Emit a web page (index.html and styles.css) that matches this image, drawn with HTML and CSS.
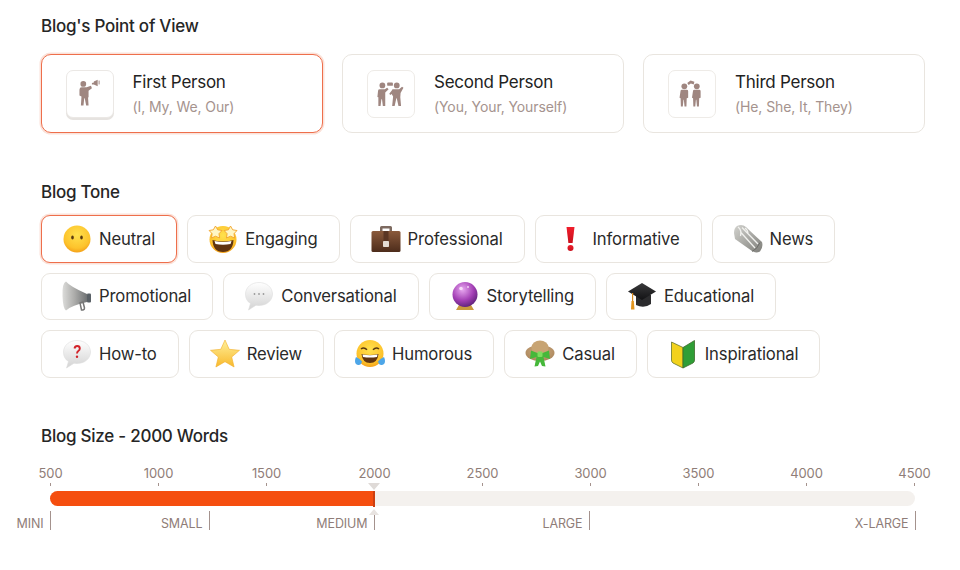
FILE: index.html
```html
<!DOCTYPE html>
<html lang="en">
<head>
<meta charset="utf-8">
<title>Blog settings</title>
<link rel="stylesheet" href="styles.css">
</head>
<body>
<main class="page">
  <section class="section">
    <h2 class="heading">Blog's Point of View</h2>
    <div class="cards">
      <div class="card selected">
        <div class="thumb">
          <svg class="figure" viewBox="0 0 48 48"><circle cx="17" cy="13.500" r="3"/><path d="M13 19.500q0-2.500 2.500-2.500h5l4.500-1.500 1 2.500-3.500 2.500v6.500l-.5 1 .5 8h-2.500l-1.500-7.500h-.5l-.8 7.500h-2.700l.6-9.500-2.100-1z"/><path d="M26 12.500l2-.5v-1l4-1.800v6.600l-4-1.800h-2z"/><rect x="33" y="10" width="1" height="4"/></svg>
        </div>
        <div class="card-text"><div class="card-title">First Person</div><div class="card-sub">(I, My, We, Our)</div></div>
      </div>
      <div class="card">
        <div class="thumb">
          <svg class="figure" viewBox="0 0 48 48"><circle cx="15" cy="15" r="3"/><circle cx="30" cy="15" r="3"/><path d="M10.500 20.500q0-1.500 2-1.500h5l2.500-1.500 1.500 1.500-3.500 3.500v14h-2.500l-.9-7h-.6l-.9 7h-2.300v-9l-1-.5z"/><path d="M25 20q0-1 1-1h6.500l3-2.500 1.500 1-3 5.500-.3 4.500.8 9h-2.700l-1.800-8h-.4l-1.800 8h-2.600l1-10-1.500-2.500-1.500 1-1-1.200z"/><rect x="20" y="12" width="6" height="3.500" rx="1"/></svg>
        </div>
        <div class="card-text"><div class="card-title">Second Person</div><div class="card-sub">(You, Your, Yourself)</div></div>
      </div>
      <div class="card">
        <div class="thumb">
          <svg class="figure" viewBox="0 0 48 48"><circle cx="16" cy="16" r="3"/><circle cx="29" cy="16" r="3"/><path d="M12 21q0-1.500 1.500-1.500h5q1.500 0 1.500 1.500v7l-1.500.5-.3 8.500h-2l-.7-7h-.4l-.7 7h-2l-.3-8.500-1.100-.5z"/><path d="M25 21q0-1.500 1.500-1.500h5q1.500 0 1.500 1.500v7l-1.500.5-.3 8.500h-2l-.7-7h-.4l-.7 7h-2l-.3-8.500-1.100-.5z"/><path d="M19 12.500l3.500-2.500 4 1.200-.7 2.800-3-1-2.300 1.500z"/></svg>
        </div>
        <div class="card-text"><div class="card-title">Third Person</div><div class="card-sub">(He, She, It, They)</div></div>
      </div>
    </div>
  </section>

  <section class="section tone">
    <h2 class="heading">Blog Tone</h2>
    <div class="chips">
      <div class="chip selected">
        <svg class="emoji" viewBox="0 0 30 30"><defs><radialGradient id="face" cx=".5" cy=".35" r=".75"><stop offset="0" stop-color="#ffe14d"/><stop offset=".65" stop-color="#fdc32c"/><stop offset="1" stop-color="#ef8d0e"/></radialGradient></defs><circle cx="15" cy="15" r="13.500" fill="url(#face)"/><ellipse cx="10.500" cy="13.500" rx="1.300" ry="1.900" fill="#5a3a10"/><ellipse cx="19.500" cy="13.500" rx="1.300" ry="1.900" fill="#5a3a10"/></svg>
        <span class="chip-label">Neutral</span>
      </div>
      <div class="chip">
        <svg class="emoji" viewBox="0 0 30 30"><circle cx="15" cy="15.500" r="13.500" fill="url(#face)"/><path d="M4.500 16q10.500 3 21 0-.5 12-10.500 12T4.500 16z" fill="#5f3410"/><path d="M6.500 17q8.500 2 17 0l-1 3q-7.500 1.500-15 0z" fill="#fff"/><path d="M7.500 2l2.200 3.800 4.300.7-3 3.200.6 4.300-4.100-1.800-4 1.800.6-4.300-3-3.200 4.200-.7zM22.500 2l2.200 3.800 4.300.7-3 3.200.6 4.300-4.100-1.800-4 1.800.6-4.300-3-3.200 4.300-.7z" fill="#fff6c4" stroke="#f2a32a" stroke-width=".9"/></svg>
        <span class="chip-label">Engaging</span>
      </div>
      <div class="chip">
        <svg class="emoji" viewBox="0 0 30 30"><defs><linearGradient id="case" x1="0" y1="0" x2="0" y2="1"><stop offset="0" stop-color="#8a5a3c"/><stop offset="1" stop-color="#4d2c1b"/></linearGradient></defs><path d="M9 8V3.500q0-1.500 1.500-1.500h9q1.500 0 1.500 1.500V8h-2.500V4.500h-7V8z" fill="#7d6a60"/><rect x=".5" y="7" width="29" height="21" rx="1.500" fill="url(#case)"/><rect x="12.500" y="7" width="5" height="11" fill="#5a3624"/><rect x="12" y="17" width="6" height="6" rx=".8" fill="#e5dcd3"/></svg>
        <span class="chip-label">Professional</span>
      </div>
      <div class="chip">
        <svg class="emoji" viewBox="0 0 30 30"><defs><linearGradient id="bang" x1="0" y1="0" x2="0" y2="1"><stop offset="0" stop-color="#f01e2c"/><stop offset="1" stop-color="#c8101c"/></linearGradient></defs><path d="M10.500 3h8l-1.900 16h-4.200z" fill="url(#bang)"/><circle cx="14.500" cy="24" r="3" fill="url(#bang)"/></svg>
        <span class="chip-label">Informative</span>
      </div>
      <div class="chip">
        <svg class="emoji" viewBox="0 0 30 30"><defs><linearGradient id="paper" x1="0" y1="0" x2="1" y2="1"><stop offset="0" stop-color="#d2d2ce"/><stop offset="1" stop-color="#7f7f7a"/></linearGradient></defs><path d="M1 9q0-5 3-7 5-2.500 9 1 5 5 16 15 1.500 5-2 9.500-4.500 2-8-.5L2 15z" fill="url(#paper)"/><path d="M5 3q4 3 2.500 9M9 3.500L25 20M7.500 8L22 24M12 4q3 2 3 6" fill="none" stroke="#f1f1ee" stroke-width="1.300"/><path d="M19 27.500q5-2 8-9" fill="none" stroke="#6c6c68" stroke-width="1"/></svg>
        <span class="chip-label">News</span>
      </div>
      <div class="chip">
        <svg class="emoji" viewBox="0 0 30 30"><defs><linearGradient id="horn" x1="0" y1="0" x2="1" y2="0"><stop offset="0" stop-color="#dcdcda"/><stop offset=".5" stop-color="#ababa9"/><stop offset="1" stop-color="#6f7274"/></linearGradient></defs><path d="M4 .500q4 5 21 12.500v8Q10 24 4 29.500 1 28 .5 15T4 .500z" fill="url(#horn)"/><path d="M18 22l3-1 1.500 6q.2 1.500-1.500 2h-1.500z" fill="none" stroke="#777" stroke-width="1.500"/><rect x="25" y="12.500" width="4" height="9" rx="1" fill="#596066"/></svg>
        <span class="chip-label">Promotional</span>
      </div>
      <div class="chip">
        <svg class="emoji" viewBox="0 0 30 30"><defs><linearGradient id="bubble" x1="0" y1="0" x2="0" y2="1"><stop offset="0" stop-color="#ffffff"/><stop offset="1" stop-color="#d3d3d3"/></linearGradient></defs><path d="M15 1.500c7.500 0 13.500 4.800 13.500 11.500S22.500 24.500 15 24.500q-1.500 0-3-.3L4.500 29l2-6.500C3 20.500 1.500 17 1.500 13 1.500 6.300 7.500 1.500 15 1.500z" fill="url(#bubble)" stroke="#dedede" stroke-width=".6"/><circle cx="10.500" cy="13" r=".9" fill="#9a9a9a"/><circle cx="15" cy="13" r=".9" fill="#9a9a9a"/><circle cx="19.500" cy="13" r=".9" fill="#9a9a9a"/></svg>
        <span class="chip-label">Conversational</span>
      </div>
      <div class="chip">
        <svg class="emoji" viewBox="0 0 30 30"><defs><radialGradient id="ball" cx=".4" cy=".3" r=".8"><stop offset="0" stop-color="#e8a8f0"/><stop offset=".55" stop-color="#a33fb5"/><stop offset="1" stop-color="#4b1a6a"/></radialGradient></defs><path d="M9 24h12l3 5H6z" fill="#c99a3c"/><circle cx="15" cy="13.500" r="12.500" fill="url(#ball)"/><circle cx="11" cy="7.500" r="1.800" fill="#f6dcf8"/><circle cx="18" cy="6" r=".9" fill="#f6dcf8"/></svg>
        <span class="chip-label">Storytelling</span>
      </div>
      <div class="chip">
        <svg class="emoji" viewBox="0 0 30 30"><defs><linearGradient id="cap" x1="0" y1="0" x2="0" y2="1"><stop offset="0" stop-color="#3a3a3c"/><stop offset="1" stop-color="#121214"/></linearGradient></defs><path d="M9 14h15v9q-7 5-15 1z" fill="#2c2c2e"/><path d="M15 2l14 8.500-14 8.500-14-8.500z" fill="url(#cap)"/><rect x="5" y="12" width="1.200" height="9" fill="#d98c1f"/><path d="M4.500 20h2.300l.7 8.500H4z" fill="#e3961f"/></svg>
        <span class="chip-label">Educational</span>
      </div>
      <div class="chip">
        <svg class="emoji" viewBox="0 0 30 30"><path d="M15 1.500c7.500 0 13.500 4.800 13.500 11.500S22.500 24.500 15 24.500q-1.500 0-3-.3L4.500 29l2-6.500C3 20.500 1.500 17 1.500 13 1.500 6.300 7.500 1.500 15 1.500z" fill="url(#bubble)" stroke="#dedede" stroke-width=".6"/><path d="M12.500 9.500q.5-2.500 2.700-2.500 2.600 0 2.600 2.500 0 1.500-1.500 2.500-1.200.8-1.300 2.500" fill="none" stroke="#d2232a" stroke-width="1.900"/><circle cx="15" cy="17.800" r="1.200" fill="#d2232a"/></svg>
        <span class="chip-label">How-to</span>
      </div>
      <div class="chip">
        <svg class="emoji" viewBox="0 0 30 30"><defs><linearGradient id="star" x1="0" y1="0" x2="0" y2="1"><stop offset="0" stop-color="#fff09a"/><stop offset="1" stop-color="#f8b92c"/></linearGradient></defs><path d="M15 1l4.200 9.300 10.300 1-7.800 6.700 2.400 10-9.100-5.300L5.900 28l2.400-10L.5 11.300l10.300-1z" fill="url(#star)" stroke="#f2ae28" stroke-width=".6" stroke-linejoin="round"/></svg>
        <span class="chip-label">Review</span>
      </div>
      <div class="chip">
        <svg class="emoji" viewBox="0 0 30 30"><circle cx="15" cy="14.500" r="13.500" fill="url(#face)"/><path d="M6 10q3-2.500 6 .8M24 10q-3-2.500-6 .8" fill="none" stroke="#5a3a10" stroke-width="1.500"/><path d="M6.500 15q8.500 2 17 0-1 9-8.500 9t-8.500-9z" fill="#5f3410"/><path d="M7.500 15.500q7.500 1.500 15 0l-.5 2.500q-7 1-14 0z" fill="#fff"/><path d="M1 18q4 1.500 6 4.500-1 4-4 3.500t-3-4q0-2 1-4zM29 18q-4 1.500-6 4.500 1 4 4 3.500t3-4q0-2-1-4z" fill="#4da6e8"/></svg>
        <span class="chip-label">Humorous</span>
      </div>
      <div class="chip">
        <svg class="emoji" viewBox="0 0 30 30"><defs><radialGradient id="hat" cx=".5" cy=".4" r=".65"><stop offset="0" stop-color="#d3b082"/><stop offset="1" stop-color="#a8835a"/></radialGradient></defs><ellipse cx="15" cy="14" rx="14.500" ry="8" fill="url(#hat)"/><ellipse cx="15" cy="8.500" rx="8.500" ry="7" fill="#c8a473"/><path d="M6 11.500l9 3.500 9-3.500 1 8.500-6.500-2 2 9.500-3.500-.5-2-4.500-2 4.500-3.500.5 2-9.500-6.500 2z" fill="#46b83a"/><rect x="12.500" y="12.500" width="5" height="5.500" rx="1" fill="#7fdc5e"/></svg>
        <span class="chip-label">Casual</span>
      </div>
      <div class="chip">
        <svg class="emoji" viewBox="0 0 30 30"><path d="M3.500 3l11.500 5.500V29L5 24q-1.500-1-1.500-3z" fill="#f2d21c" stroke="#64752c" stroke-width=".8"/><path d="M26.500 1.500L15 8.500V29l10-5q1.500-1 1.500-3z" fill="#2f9e36" stroke="#3f6b2c" stroke-width=".8"/></svg>
        <span class="chip-label">Inspirational</span>
      </div>
    </div>
  </section>

  <section class="size">
    <h2 class="heading">Blog Size - 2000 Words</h2>
    <div class="scale">
      <div class="tick"><span class="tick-label">500</span></div>
      <div class="tick"><span class="tick-label">1000</span></div>
      <div class="tick"><span class="tick-label">1500</span></div>
      <div class="tick"><span class="tick-label">2000</span></div>
      <div class="tick"><span class="tick-label">2500</span></div>
      <div class="tick"><span class="tick-label">3000</span></div>
      <div class="tick"><span class="tick-label">3500</span></div>
      <div class="tick"><span class="tick-label">4000</span></div>
      <div class="tick"><span class="tick-label">4500</span></div>
    </div>
    <div class="track">
      <div class="fill" style="width:37.5%"><div class="handle"></div></div>
    </div>
    <div class="ranges">
      <div class="range" style="width:51px">MINI</div>
      <div class="range" style="width:159px">SMALL</div>
      <div class="range" style="width:165px">MEDIUM</div>
      <div class="range" style="width:215px">LARGE</div>
      <div class="range" style="width:326px">X-LARGE</div>
    </div>
  </section>
</main>
</body>
</html>
```
FILE: styles.css
```css
* { box-sizing: border-box; }
html, body { margin: 0; padding: 0; background: #fff; }
body { font-family: Inter, "Liberation Sans", sans-serif; color: #2a2a2a; width: 960px; height: 570px; overflow: hidden; }
.page { padding-top: 15px; }
.section { padding-left: 41px; width: 925px; }
.heading { margin: 0; font-size: 17px; line-height: 22px; font-weight: 450; letter-spacing: -.25px; color: #262626; }

.cards { display: grid; grid-template-columns: repeat(3, 282px); column-gap: 19px; margin-top: 17px; }
.card { height: 79px; display: flex; align-items: center; gap: 19px; padding-left: 24px; background: #fff; border: 1px solid #e9e5df; border-radius: 10px; }
.card.selected { border: 1.500px solid #ee6f4c; box-shadow: 0 0 0 1.500px #fbe2d9; padding-left: 23.500px; }
.thumb { width: 48px; height: 48px; border: 1px solid #eeebe7; border-radius: 7px; background: #fff; flex: none; }
.card.selected .thumb { border-color: #ebe8e5; box-shadow: 0 2px 0 #e6e3e0; }
.figure { display: block; width: 46px; height: 46px; fill: #9f8680; }
.card-title { font-size: 17px; line-height: 24px; font-weight: 400; letter-spacing: -.25px; color: #222; }
.card-sub { font-size: 14px; line-height: 22px; margin-top: 2px; letter-spacing: -.1px; color: #a5938e; }

.tone { margin-top: 48px; }
.chips { display: flex; flex-wrap: wrap; gap: 10px; margin-top: 12px; max-width: 850px; }
.chip { height: 47.500px; display: flex; align-items: center; gap: 7px; padding: 0 21px 0 20px; background: #fff; border: 1px solid #e9e5df; border-radius: 9px; }
.chip.selected { border: 1.500px solid #ee6f4c; box-shadow: 0 0 0 1.500px #fbe2d9; }
.emoji { display: block; width: 30px; height: 30px; flex: none; }
.chip-label { font-size: 16.650px; letter-spacing: -.15px; color: #2a2a2a; white-space: nowrap; }

.size { margin-top: 47px; }
.size .heading { padding-left: 41px; }
.scale { display: flex; justify-content: space-between; width: 865px; margin: 18px 0 0 50px; height: 21px; }
.tick { width: 1px; height: 21px; display: flex; flex-direction: column; align-items: center; justify-content: space-between; }
.tick::after { content: ""; width: 1px; height: 3px; background: #a4928d; flex: none; }
.tick-label { font-size: 13px; line-height: 16px; color: #8f7d78; letter-spacing: -.1px; }
.track { width: 865px; height: 15px; margin: 5px 0 0 50px; background: #f4f1ee; border-radius: 8px; }
.fill { height: 100%; position: relative; background: #f54e0f; border-radius: 8px 0 0 8px; }
.handle { position: absolute; right: -1px; top: 0; width: 2px; height: 16px; background: #cc3f10; }
.handle::before { content: ""; position: absolute; left: -5px; top: -8px; border: 6px solid transparent; border-top: 7px solid #dfdad7; border-bottom: 0; }
.handle::after { content: ""; position: absolute; left: -4px; bottom: -8px; border: 5px solid transparent; border-bottom: 6px solid #e8e3e0; border-top: 0; }
.ranges { display: flex; margin-top: 5px; height: 19px; }
.range { flex: none; height: 19px; border-right: 1px solid #a4928d; padding-right: 6.500px; padding-bottom: 0; display: flex; align-items: flex-end; justify-content: flex-end; font-size: 12.500px; line-height: 12px; color: #8f7d78; letter-spacing: -.1px; white-space: nowrap; }
```
